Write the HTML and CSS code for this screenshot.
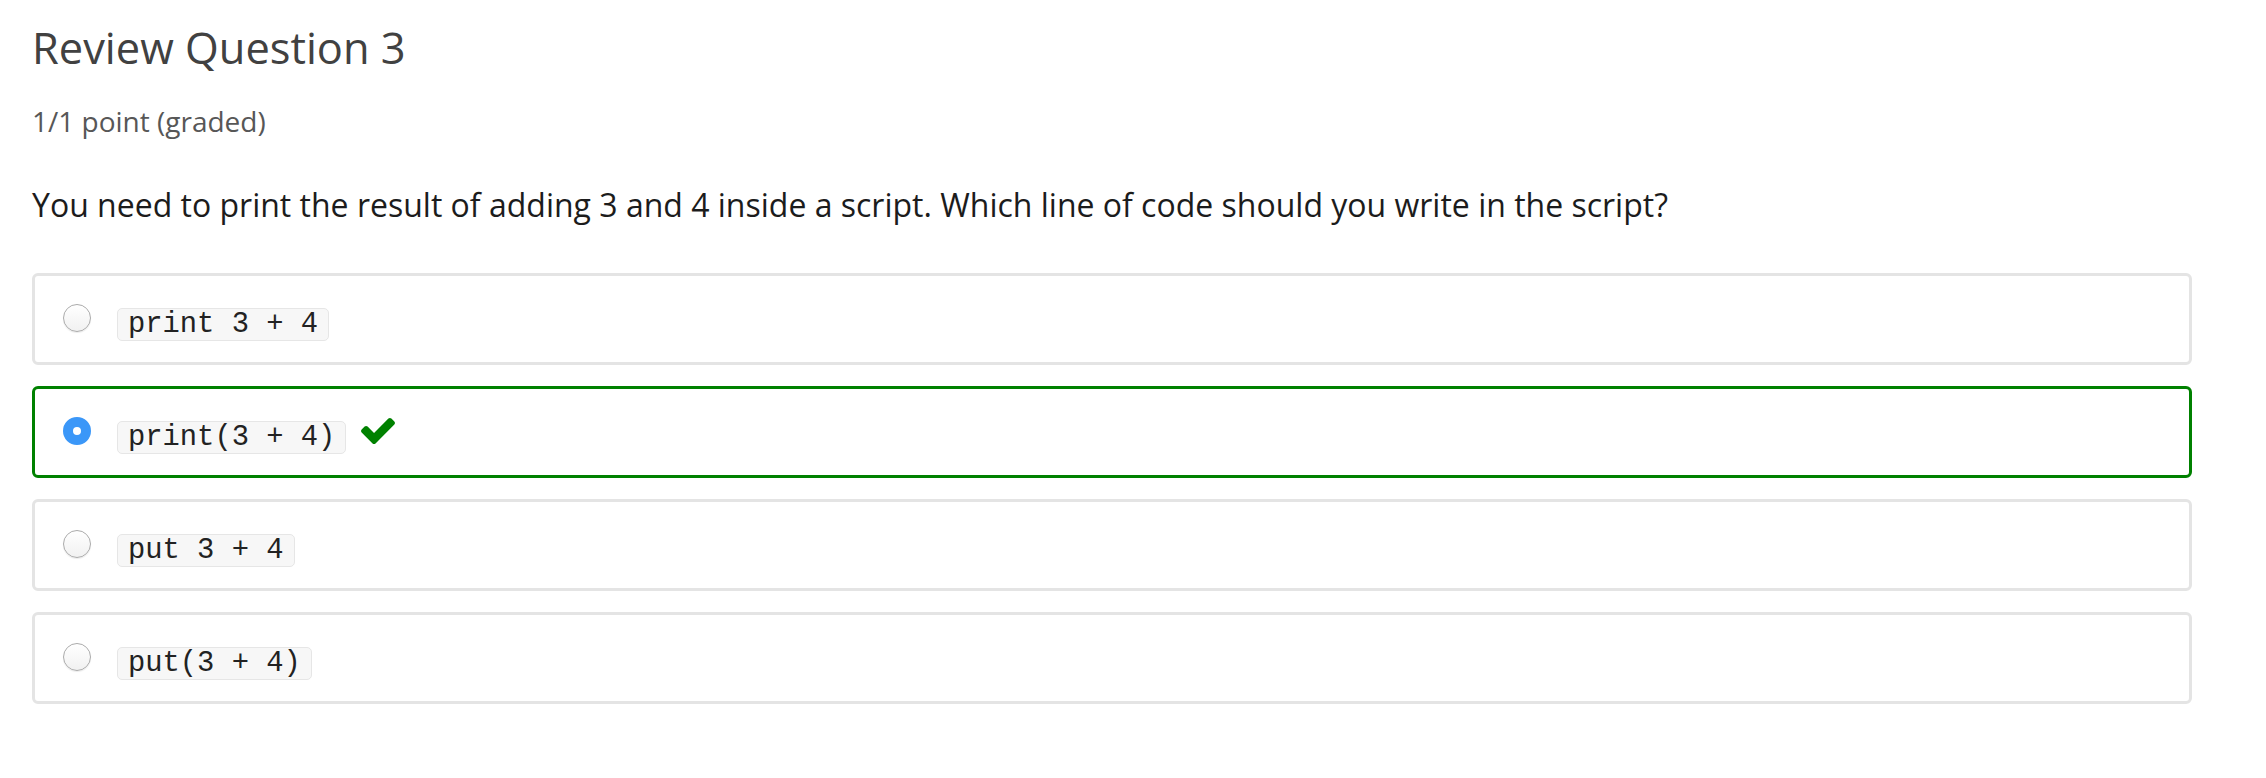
FILE: index.html
```html
<!DOCTYPE html>
<html lang="en">
<head>
<meta charset="utf-8">
<title>Review Question 3</title>
<link rel="stylesheet" href="styles.css">
</head>
<body>
<div class="problem">
  <h3 class="problem-header">Review Question 3</h3>
  <div class="problem-progress">1/1 point (graded)</div>
  <p class="question">You need to print the result of adding 3 and 4 inside a script. Which line of code should you write in the script?</p>
  <div class="choices">
    <label class="choice">
      <input type="radio" name="q3" class="radio">
      <code class="code">print 3 + 4</code>
    </label>
    <label class="choice choice-correct">
      <input type="radio" name="q3" class="radio" checked>
      <code class="code">print(3 + 4)</code>
      <svg class="check" viewBox="121 334 1550 1188" width="34" height="26" aria-hidden="true"><path d="M1671 566q0 40-28 68l-724 724-136 136q-28 28-68 28t-68-28l-136-136-362-362q-28-28-28-68t28-68l136-136q28-28 68-28t68 28l294 295 656-657q28-28 68-28t68 28l136 136q28 28 28 68z"/></svg>
    </label>
    <label class="choice">
      <input type="radio" name="q3" class="radio">
      <code class="code">put 3 + 4</code>
    </label>
    <label class="choice">
      <input type="radio" name="q3" class="radio">
      <code class="code">put(3 + 4)</code>
    </label>
  </div>
</div>
</body>
</html>
```
FILE: styles.css
```css
html, body {
  margin: 0;
  padding: 0;
  background: #ffffff;
}

body {
  font-family: "Open Sans", "Liberation Sans", sans-serif;
}

.problem {
  width: 2160px;
  padding: 22px 0 0 32px;
}

.problem-header {
  margin: 0;
  font-size: 43.4px;
  line-height: 52px;
  font-weight: 400;
  color: #414141;
}

.problem-progress {
  margin-top: 29px;
  font-size: 28px;
  line-height: 36px;
  color: #575757;
}

.question {
  margin: 48px 0 0 0;
  font-size: 32px;
  line-height: 36px;
  color: #1c1c1c;
}

.choices {
  margin-top: 50px;
  display: flex;
  flex-direction: column;
  gap: 21px;
}

.choice {
  display: flex;
  align-items: flex-start;
  height: 92px;
  box-sizing: border-box;
  padding: 28px 28px 0 28px;
  border: 3px solid #e4e4e4;
  border-radius: 6px;
}

.choice-correct {
  border-color: #008100;
}

.radio {
  appearance: none;
  -webkit-appearance: none;
  margin: 0;
  width: 28px;
  height: 28px;
  flex: none;
  box-sizing: border-box;
  border-radius: 50%;
  border: 1px solid #ababab;
  background: linear-gradient(#ffffff, #f1f1f1);
  box-shadow: inset 0 1px 1px rgba(255, 255, 255, 0.9), 0 1px 1px rgba(0, 0, 0, 0.08);
}

.radio:checked {
  border: 10px solid #3b97f8;
  background: #ffffff;
  box-shadow: none;
}

.code {
  margin: 4px 0 0 26px;
  padding: 1px 10px;
  font-family: "Liberation Mono", "Courier New", monospace;
  font-size: 28.8px;
  line-height: 29px;
  color: #222222;
  background: #f7f7f7;
  border: 1px solid #e6e6e6;
  border-radius: 5px;
  white-space: pre;
}

.check {
  margin: 1px 0 0 15px;
  fill: #008100;
  flex: none;
}
```
